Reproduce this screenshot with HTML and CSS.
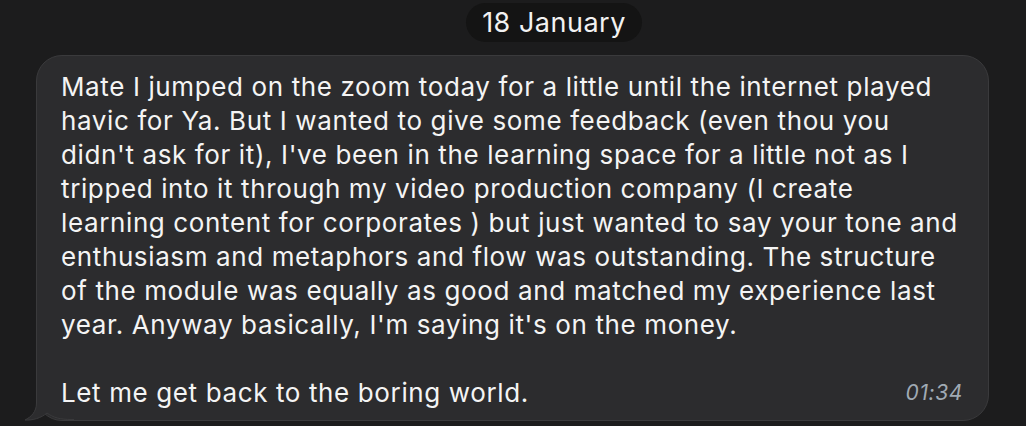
FILE: index.html
```html
<!DOCTYPE html>
<html lang="en">
<head>
<meta charset="utf-8">
<title>Message</title>
<link rel="stylesheet" href="styles.css">
</head>
<body>
<div class="chat">
  <div class="date-row"><span class="date-pill">18 January</span></div>
  <div class="bubble-row">
    <div class="bubble">
      <p class="text">Mate I jumped on the zoom today for a little until the internet played<br>havic for Ya. But I wanted to give some feedback (even thou you<br>didn't ask for it), I've been in the learning space for a little not as I<br>tripped into it through my video production company (I create<br>learning content for corporates ) but just wanted to say your tone and<br>enthusiasm and metaphors and flow was outstanding. The structure<br>of the module was equally as good and matched my experience last<br>year. Anyway basically, I'm saying it's on the money.<br><br>Let me get back to the boring world.</p>
      <span class="time">01:34</span>
      <svg class="tail" width="50" height="41" viewBox="0 0 50 41">
        <path d="M12.5 0 L12.5 22 C12.5 31 7 36 1 39 C9 39.5 17 37 23 32 C29 36.5 36 38.5 48 38.5 L50 38.5 L50 0 Z" fill="#2c2c2e"/>
        <path d="M12.5 0 L12.5 22 C12.5 31 7 36 1 39 C9 39.5 17 37 23 32 C29 36.5 36 38.5 48 38.5 L50 38.5" fill="none" stroke="#3a3a3c" stroke-width="1"/>
      </svg>
    </div>
  </div>
</div>
</body>
</html>
```
FILE: styles.css
```css
html, body {
  margin: 0;
  padding: 0;
  background: #1c1c1d;
}
body {
  width: 1026px;
  height: 426px;
  overflow: hidden;
  font-family: Inter, "Noto Sans", "Liberation Sans", sans-serif;
}
.chat {
  display: flex;
  flex-direction: column;
}
.date-row {
  display: flex;
  justify-content: center;
  padding-left: 82px;
  padding-top: 3px;
}
.date-pill {
  background: #141414;
  color: #f2f2f2;
  font-size: 27px;
  letter-spacing: 0.5px;
  line-height: 39px;
  padding: 0 16px;
  border-radius: 20px;
}
.bubble-row {
  display: flex;
  padding-left: 36px;
  padding-top: 13px;
}
.bubble {
  position: relative;
  width: 953px;
  height: 366px;
  box-sizing: border-box;
  background: #2c2c2e;
  border: 1px solid #3a3a3c;
  border-radius: 26px;
  padding: 14px 26px 0 24px;
}
.text {
  position: relative;
  z-index: 1;
  margin: 0;
  color: #f4f4f4;
  font-size: 26px;
  letter-spacing: 0.62px;
  line-height: 34px;
  white-space: nowrap;
}
.time {
  position: absolute;
  z-index: 1;
  right: 25px;
  bottom: 15px;
  color: #a0aab4;
  font-style: italic;
  font-size: 21px;
  letter-spacing: 0.6px;
}
.tail {
  position: absolute;
  z-index: 0;
  left: -13px;
  bottom: -2px;
}
```
